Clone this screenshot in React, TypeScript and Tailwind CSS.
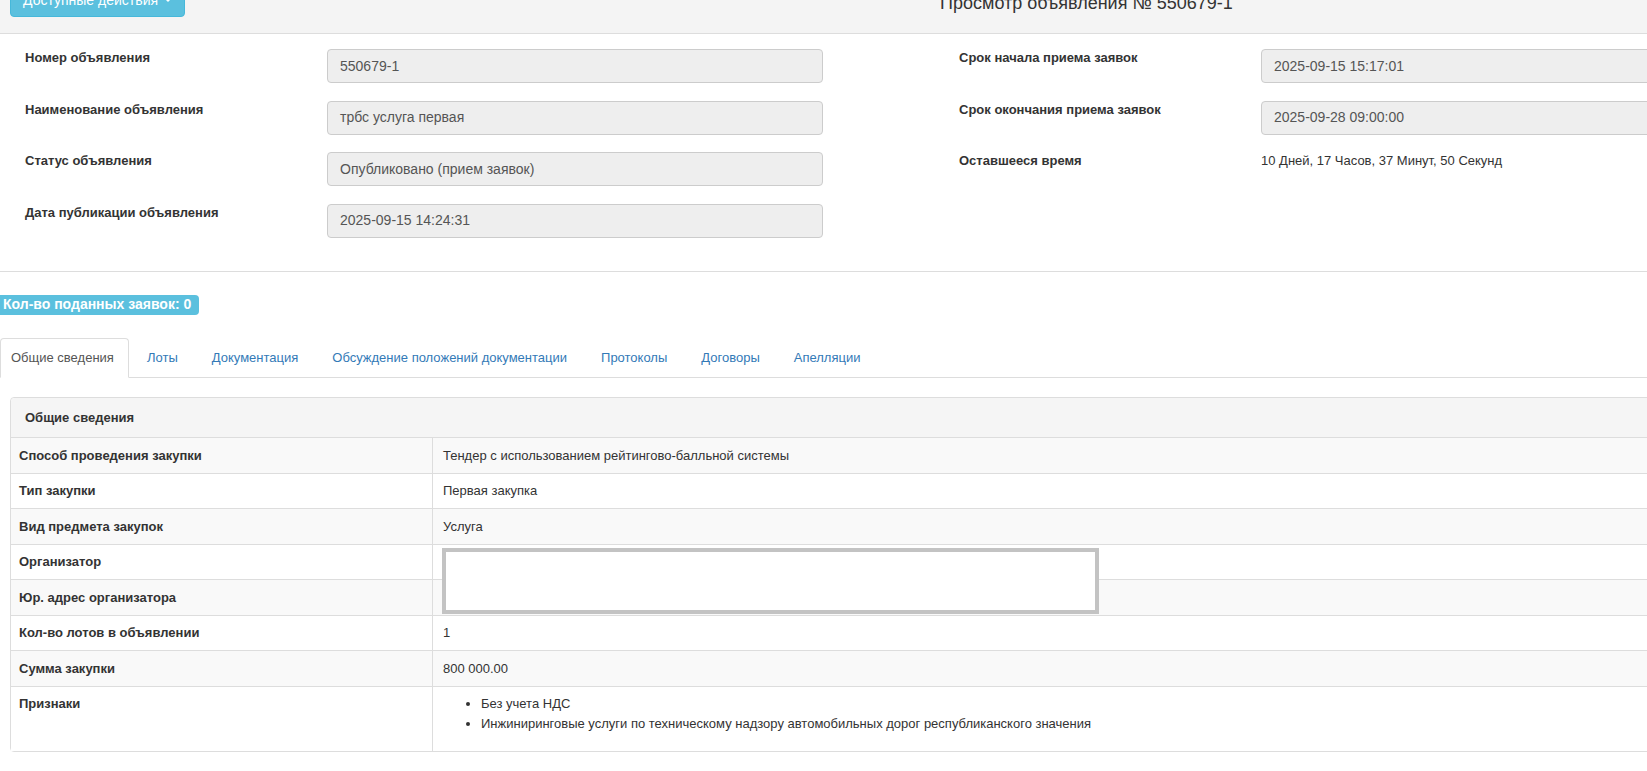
import React from "react";

const font = { fontFamily: '"Liberation Sans", Arial, sans-serif' };

function Field({ label, value }: { label: string; value: string }) {
  return (
    <div className="flex h-[34px] items-start mb-[17.5px]">
      <div className="w-[302px] shrink-0 text-[13px] font-bold text-[#333] leading-[18px] whitespace-nowrap">{label}</div>
      <div className="w-[496px] shrink-0 h-[34px] bg-[#eeeeee] border border-[#cccccc] rounded-[4px] px-[12px] flex items-center text-[14px] text-[#555] whitespace-nowrap">
        {value}
      </div>
    </div>
  );
}

const rows: [string, React.ReactNode][] = [
  ["Способ проведения закупки", "Тендер с использованием рейтингово-балльной системы"],
  ["Тип закупки", "Первая закупка"],
  ["Вид предмета закупок", "Услуга"],
  ["Организатор", ""],
  ["Юр. адрес организатора", ""],
  ["Кол-во лотов в объявлении", "1"],
  ["Сумма закупки", "800 000.00"],
];

export default function App() {
  const tabs = ["Лоты", "Документация", "Обсуждение положений документации", "Протоколы", "Договоры", "Апелляции"];
  return (
    <div className="w-[1647px] h-[771px] overflow-hidden bg-white" style={font}>
      <div className="w-[1800px]">
        {/* Header */}
        <div className="h-[52px] -mt-[18px] bg-[#f4f4f4] border-b border-[#dddddd] flex items-start">
          <div className="pl-[10px] pt-[1px] shrink-0">
            <button className="h-[34px] px-[12px] bg-[#5bc0de] border border-[#46b8da] rounded-[4px] text-white text-[14px] flex items-center gap-[4px] whitespace-nowrap">
              Доступные действия
              <span className="inline-block w-0 h-0 border-l-[4px] border-r-[4px] border-t-[4px] border-l-transparent border-r-transparent border-t-white ml-[2px]" />
            </button>
          </div>
          <div className="ml-[755px] pt-[11px] text-[18px] text-[#333] leading-[20px] whitespace-nowrap">Просмотр объявления № 550679-1</div>
        </div>

        {/* Form */}
        <div className="h-[238px] border-b border-[#dddddd] pt-[15px] flex">
          <div className="w-[934px] pl-[25px]">
            <Field label="Номер объявления" value="550679-1" />
            <Field label="Наименование объявления" value="трбс услуга первая" />
            <Field label="Статус объявления" value="Опубликовано (прием заявок)" />
            <Field label="Дата публикации объявления" value="2025-09-15 14:24:31" />
          </div>
          <div className="flex-1 pl-[25px]">
            <Field label="Срок начала приема заявок" value="2025-09-15 15:17:01" />
            <Field label="Срок окончания приема заявок" value="2025-09-28 09:00:00" />
            <div className="flex items-start">
              <div className="w-[302px] shrink-0 text-[13px] font-bold text-[#333] leading-[18px]">Оставшееся время</div>
              <div className="text-[13px] text-[#333] leading-[18px]">10 Дней, 17 Часов, 37 Минут, 50 Секунд</div>
            </div>
          </div>
        </div>

        {/* Badge */}
        <div className="pt-[20px] h-[40px]">
          <span className="inline-flex items-center h-[20px] bg-[#5bc0de] text-white font-bold text-[14px] pl-[3px] pr-[8px] rounded-r-[4px] whitespace-nowrap">
            Кол-во поданных заявок: 0
          </span>
        </div>

        {/* Tabs */}
        <div className="mt-[26px] border-b border-[#dddddd] flex h-[40px]">
          <div className="h-[40px] w-[129px] px-[10px] border border-[#dddddd] border-b-white bg-white rounded-t-[4px] text-[13px] text-[#555] flex items-center whitespace-nowrap">
            Общие сведения
          </div>
          {tabs.map((t) => (
            <div key={t} className="h-[39px] px-[16px] ml-[2px] text-[13px] text-[#337ab7] flex items-center whitespace-nowrap">
              {t}
            </div>
          ))}
        </div>

        {/* Panel */}
        <div className="ml-[10px] mr-[10px] mt-[19px] border border-[#dddddd] rounded-[4px] relative text-[13px] text-[#333]">
          <div className="h-[40px] bg-[#f5f5f5] border-b border-[#dddddd] pl-[14px] flex items-center font-bold rounded-t-[4px]">
            Общие сведения
          </div>
          {rows.map(([k, v], i) => (
            <div key={k} className={`flex h-[35.5px] border-b border-[#dddddd] ${i % 2 === 0 ? "bg-[#f9f9f9]" : "bg-white"}`}>
              <div className="w-[422px] shrink-0 border-r border-[#dddddd] px-[8px] flex items-center font-bold whitespace-nowrap">{k}</div>
              <div className="flex-1 px-[10px] flex items-center whitespace-nowrap">{v}</div>
            </div>
          ))}
          <div className="flex h-[64px] bg-white">
            <div className="w-[422px] shrink-0 border-r border-[#dddddd] px-[8px] pt-[7px] font-bold leading-[20px]">Признаки</div>
            <div className="flex-1 px-[10px] pt-[7px]">
              <ul className="list-disc pl-[38px] leading-[20px]">
                <li>Без учета НДС</li>
                <li>Инжиниринговые услуги по техническому надзору автомобильных дорог республиканского значения</li>
              </ul>
            </div>
          </div>
          <div className="absolute left-[431px] top-[150px] w-[657px] h-[66px] border-[4px] border-[#c3c3c3] bg-white" />
        </div>
      </div>
    </div>
  );
}
